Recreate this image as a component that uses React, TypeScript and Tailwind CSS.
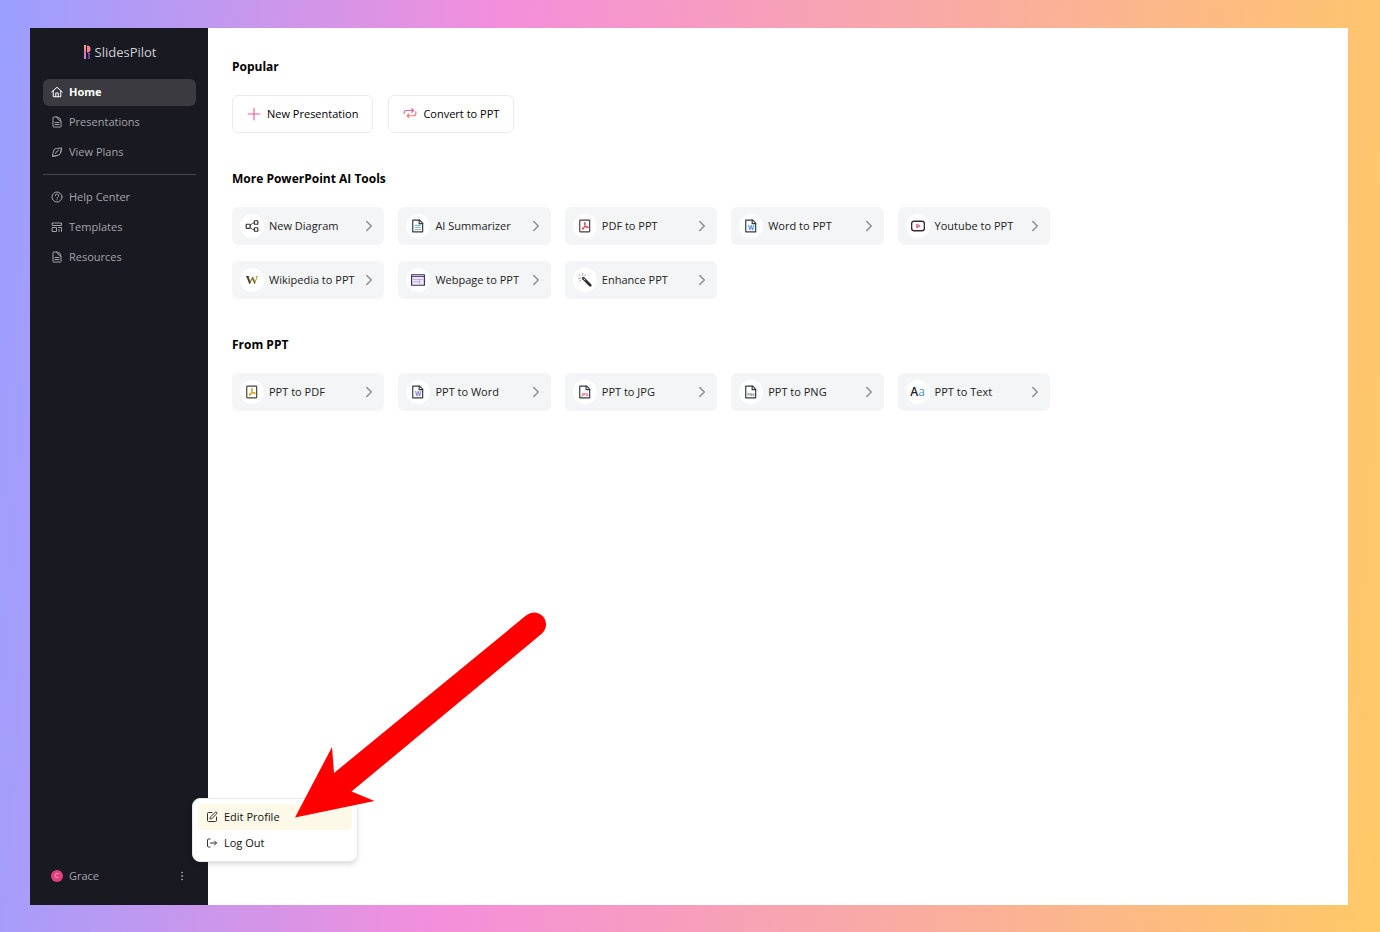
import { type ReactNode } from 'react';
import { ChevronRight, EllipsisVertical, SquarePen } from 'lucide-react';

interface LinkItem {
    label: string;
    icon: ReactNode;
    active?: boolean;
}

interface IconProps {
    children: ReactNode;
    className?: string;
}

// Shared base for the outline icons
function Icon({ children, className = 'size-3' }: IconProps) {
    return (
        <svg
            viewBox="0 0 24 24"
            fill="none"
            stroke="currentColor"
            strokeWidth="2"
            strokeLinecap="round"
            strokeLinejoin="round"
            className={`shrink-0 ${className}`}
            aria-hidden="true"
        >
            {children}
        </svg>
    );
}

function PageIcon() {
    return (
        <Icon>
            <path d="M4 3a1 1 0 0 1 1-1h7q8 1 8 9v10a1 1 0 0 1-1 1H5a1 1 0 0 1-1-1z" />
            <path d="M11 2q3 1 3 4 0 2 2 2 3 0 4 3M8 13h8M8 17h8" />
        </Icon>
    );
}

interface FileIconProps {
    color: string;
    stroke?: string;
    text?: string;
    size?: number;
}

function FileIcon({ color, stroke = '#333a45', text, size = 10 }: FileIconProps) {
    return (
        <Icon className="size-[14px]">
            <path stroke={stroke} d="M3 2h12l5 5v15H3z" />
            <path stroke={stroke} d="M14 2v6h6" />
            {text ? (
                <text
                    x="12"
                    y="19"
                    textAnchor="middle"
                    fill={color}
                    stroke="none"
                    fontSize={size}
                    fontWeight="700"
                    fontFamily="Open Sans, sans-serif"
                >
                    {text}
                </text>
            ) : (
                <path stroke={color} d="M7 11h9M7 14.500h9M7 18h9" />
            )}
        </Icon>
    );
}

function PdfIcon({ color, stroke }: { color: string; stroke: string }) {
    return (
        <Icon className="size-[14px]">
            <rect x="3" y="2" width="17" height="20" rx="1" stroke={stroke} />
            <path
                stroke={color}
                strokeWidth="1.8"
                d="M12 6c-2 0-1 3 0 5 1.200 2.500 3 4 4.500 4s1.500-2-1-2c-3 0-6 1-7.500 2.500S8 18.500 9.500 16.500 13 9 12 6z"
            />
        </Icon>
    );
}

const mainLinks: LinkItem[] = [
    {
        label: 'Home',
        active: true,
        icon: (
            <Icon>
                <path d="M1.500 12 12 2.500 22.500 12M4.500 10v11.500h15V10" />
                <path d="M9.500 21v-7h5v7" />
            </Icon>
        ),
    },
    { label: 'Presentations', icon: <PageIcon /> },
    {
        label: 'View Plans',
        icon: (
            <Icon>
                <path d="M3 20 5 10q1-5 6-5l10-1-2 10q-1 5-6 5z" />
                <path d="M3 20q6 1 10-1M21 4q1 6-2 10M9 15q1-5 6-6" />
            </Icon>
        ),
    },
];

const supportLinks: LinkItem[] = [
    {
        label: 'Help Center',
        icon: (
            <Icon>
                <circle cx="12" cy="12" r="10" />
                <path d="M8.500 9.500a3.500 3.500 0 1 1 5 3c-1 .6-1.500 1-1.500 2M12 17.500v.1" />
            </Icon>
        ),
    },
    {
        label: 'Templates',
        icon: (
            <Icon>
                <path d="M3 4h18v5H3zM3 13h8v8H3zM15 13h6v8M16 17v4" />
            </Icon>
        ),
    },
    { label: 'Resources', icon: <PageIcon /> },
];

const aiTools: LinkItem[] = [
    {
        label: 'New Diagram',
        icon: (
            <Icon className="size-[14px] text-[#333333]">
                <rect x="2" y="9" width="7" height="7" rx="1" />
                <rect x="16" y="3" width="6" height="6" rx="1" />
                <rect x="16" y="15" width="6" height="6" rx="1" />
                <path d="M9 11l4-4h3M9 14l4 4h3" strokeWidth="1.500" />
            </Icon>
        ),
    },
    { label: 'AI Summarizer', icon: <FileIcon color="#86b6c4" /> },
    { label: 'PDF to PPT', icon: <PdfIcon color="#d9566b" stroke="#4a3a44" /> },
    { label: 'Word to PPT', icon: <FileIcon color="#3d8fd8" text="W" size={11} /> },
    {
        label: 'Youtube to PPT',
        icon: (
            <Icon className="size-[14px]">
                <rect x="1" y="4" width="22" height="16" rx="4" stroke="#3d2a35" strokeWidth="2.500" />
                <path d="m10 9 5 3-5 3z" stroke="#e0607a" />
            </Icon>
        ),
    },
    {
        label: 'Wikipedia to PPT',
        icon: (
            <span className="bg-linear-to-r from-[#2e2a18] to-[#d0a030] bg-clip-text font-['Liberation_Serif',serif] text-[13px] leading-4 font-bold text-transparent">
                W
            </span>
        ),
    },
    {
        label: 'Webpage to PPT',
        icon: (
            <Icon className="size-[14px]">
                <rect x="1" y="3" width="22" height="18" fill="#efe8fc" stroke="#3a3352" />
                <path d="M2 6h20" stroke="#5a4a86" strokeWidth="2" />
                <path d="M4 11h16M4 15h11M15 11v8" stroke="#b7a2dc" strokeWidth="1.500" />
            </Icon>
        ),
    },
    {
        label: 'Enhance PPT',
        icon: (
            <Icon className="size-[14px]">
                <path d="m9 9 12 12" stroke="#2c2c2c" strokeWidth="4.500" />
                <path d="m10 10 2 2" stroke="#ffffff" strokeWidth="1.500" />
                <path d="M8 1v3M2 3l2 2M1 9h3M13 3l-1 2M3 14l2-2" stroke="#8a8a8a" strokeWidth="1.500" />
            </Icon>
        ),
    },
];

const fromPpt: LinkItem[] = [
    { label: 'PPT to PDF', icon: <PdfIcon color="#c9ab2e" stroke="#45423a" /> },
    { label: 'PPT to Word', icon: <FileIcon color="#7f7cc8" text="W" size={11} /> },
    { label: 'PPT to JPG', icon: <FileIcon color="#e0485c" text="JPG" size={7} /> },
    { label: 'PPT to PNG', icon: <FileIcon color="#6f7f78" text="PNG" size={6} /> },
    {
        label: 'PPT to Text',
        icon: (
            <span className="text-xs leading-4 font-semibold text-[#222222]">
                A<span className="font-normal text-[#4a90c8]">a</span>
            </span>
        ),
    },
];

function Logo() {
    return (
        <svg viewBox="0 0 8 15" className="h-[15px] w-2" aria-hidden="true">
            <defs>
                <linearGradient id="logo-left" x1="0" y1="0" x2="0" y2="1">
                    <stop offset="0" stopColor="#f7b27a" />
                    <stop offset="0.5" stopColor="#ee6fb0" />
                    <stop offset="1" stopColor="#d77be0" />
                </linearGradient>
            </defs>
            <path d="M1 0h2v14H1z" fill="url(#logo-left)" />
            <path d="M4 0.500a3.500 3.500 0 0 1 0 7z" fill="#f2848f" />
            <path d="M5 8h2v1.500H5z" fill="#b35fd8" />
            <path d="M5 10h2v4H5z" fill="#5b4a9c" />
        </svg>
    );
}

function NavList({ links }: { links: LinkItem[] }) {
    return (
        <ul className="flex flex-col gap-[3px]">
            {links.map((link) => (
                <li key={link.label}>
                    <a
                        href="#"
                        className={`flex h-[27px] items-center gap-1.5 rounded-md px-2 pb-0.5 ${
                            link.active ? 'bg-[#3a3a40] font-bold text-white' : 'text-[#a3a3a9]'
                        }`}
                    >
                        {link.icon}
                        {link.label}
                    </a>
                </li>
            ))}
        </ul>
    );
}

function ToolSection({ title, tools }: { title: string; tools: LinkItem[] }) {
    return (
        <section className="flex flex-col gap-[18px]">
            <h2 className="text-xs leading-5 font-bold">{title}</h2>
            <div className="grid max-w-[818px] grid-cols-5 gap-x-[14px] gap-y-4">
                {tools.map((tool) => (
                    <button
                        key={tool.label}
                        type="button"
                        className="flex h-[38px] items-center gap-[5px] rounded-md bg-[#f3f5f6] pr-1.5 pl-2 text-left text-[#222222]"
                    >
                        <span className="flex size-6 shrink-0 items-center justify-center rounded-full bg-white">
                            {tool.icon}
                        </span>
                        <span className="flex-1 whitespace-nowrap">{tool.label}</span>
                        <ChevronRight className="size-[18px] shrink-0 text-[#8f8f8f]" strokeWidth={2} />
                    </button>
                ))}
            </div>
        </section>
    );
}

function ProfileMenu() {
    return (
        <div className="absolute bottom-[43px] left-[162px] flex w-[166px] flex-col rounded-lg border border-[#e8e8e8] bg-white p-[5px] font-medium text-[#111111] shadow-md">
            <button type="button" className="flex h-[26px] items-center gap-1.5 rounded-sm bg-[#fdf9e8] px-2">
                <SquarePen className="size-3 text-[#333333]" />
                Edit Profile
            </button>
            <button type="button" className="flex h-[26px] items-center gap-1.5 rounded-sm px-2">
                <Icon className="size-3 text-[#333333]">
                    <path d="M8 4H5a2 2 0 0 0-2 2v12a2 2 0 0 0 2 2h3M9 12h12M17 8l4 4-4 4" />
                </Icon>
                Log Out
            </button>
        </div>
    );
}

function PointerArrow() {
    return (
        <svg
            viewBox="0 0 260 214"
            className="pointer-events-none absolute bottom-[83px] left-[260px] h-[214px] w-[260px]"
            aria-hidden="true"
        >
            <path
                fill="#ff0000"
                d="M5 209.500 42 139l2 26L236 7.500Q240 4.500 244 4.500A12 12 0 0 1 256 16.500Q256 21.500 252 25.500L61.500 183.500 84.500 193z"
            />
        </svg>
    );
}

export default function App() {
    return (
        <div className="flex min-h-screen bg-[linear-gradient(94deg,#9a9fff_0%,#f48fdb_35%,#ffc966_100%)] pt-7 pr-8 pb-[27px] pl-[30px] font-['Open_Sans',sans-serif] text-[11px] leading-4">
            <div className="relative flex flex-1 bg-white">
                <aside className="flex w-[178px] shrink-0 flex-col bg-[#191921] pt-[14px] pr-3 pb-4 pl-[13px]">
                    <a href="#" className="flex h-5 items-center justify-center gap-1 text-[13px] text-[#d0d0d4]">
                        <Logo />
                        SlidesPilot
                    </a>
                    <nav className="mt-[17px]">
                        <NavList links={mainLinks} />
                        <hr className="mt-2 mb-[9px] border-[#45454d]" />
                        <NavList links={supportLinks} />
                    </nav>
                    <div className="mt-auto flex h-[27px] items-center gap-1.5 px-2 text-[#a3a3a9]">
                        <span className="flex size-3 items-center justify-center rounded-full bg-[#e0407c] text-[7px] text-[#ffc0d8]">
                            C
                        </span>
                        <span className="flex-1">Grace</span>
                        <button type="button" aria-label="Account options">
                            <EllipsisVertical className="size-3" />
                        </button>
                    </div>
                </aside>

                <main className="flex min-w-0 flex-1 flex-col gap-9 px-6 pt-[29px] text-black">
                    <section className="flex flex-col gap-[18px]">
                        <h2 className="text-xs leading-5 font-bold">Popular</h2>
                        <div className="flex gap-[15px] font-medium">
                            <button
                                type="button"
                                className="flex h-[38px] items-center gap-1.5 rounded-md border border-[#ececec] bg-white px-[14px]"
                            >
                                <Icon className="size-[14px] text-[#e85d9c]">
                                    <path d="M12 2v20M2 12h20" />
                                </Icon>
                                New Presentation
                            </button>
                            <button
                                type="button"
                                className="flex h-[38px] items-center gap-1.5 rounded-md border border-[#ececec] bg-white px-[14px]"
                            >
                                <Icon className="size-[14px]">
                                    <path d="M2 11V9q0-3 3-3h13M15 3l3 3-3 3" stroke="#e8609c" />
                                    <path d="M22 8v3q0 4-4 4H7M10 12l-3 3 3 3" stroke="#f07f74" />
                                </Icon>
                                Convert to PPT
                            </button>
                        </div>
                    </section>
                    <ToolSection title="More PowerPoint AI Tools" tools={aiTools} />
                    <ToolSection title="From PPT" tools={fromPpt} />
                </main>

                <ProfileMenu />
                <PointerArrow />
            </div>
        </div>
    );
}
